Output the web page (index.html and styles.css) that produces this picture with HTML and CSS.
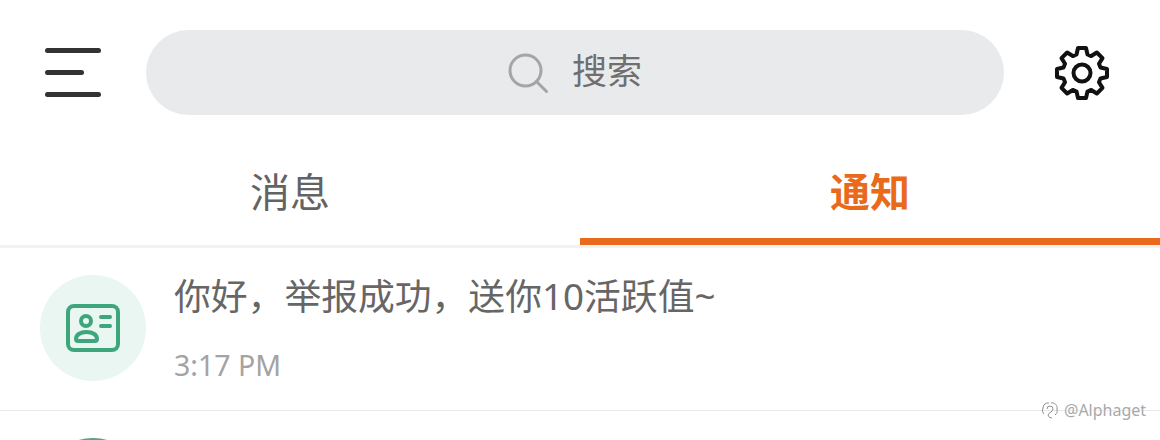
FILE: index.html
```html
<!DOCTYPE html>
<html lang="zh">
<head>
    <meta charset="UTF-8">
    <title>通知</title>
    <link rel="stylesheet" href="styles.css">
</head>
<body>
    <div class="page">
        <div class="topbar">
            <div class="menu">
                <span class="menu-line"></span>
                <span class="menu-line short"></span>
                <span class="menu-line"></span>
            </div>
            <div class="search">
                <svg class="search-icon" viewBox="0 0 40 40" fill="none" stroke="#a3a5a6" stroke-width="3" stroke-linecap="round">
                    <circle cx="17.5" cy="17.5" r="15.5"/>
                    <path d="M28.5 28.5 L38.5 38.5"/>
                </svg>
                <span class="search-text">搜索</span>
            </div>
            <svg class="gear" viewBox="0 0 56 56" fill="none" stroke="#111" stroke-width="4" stroke-linejoin="round">
                <circle cx="28" cy="28" r="8.500"/>
                <path d="M22.500 9.500 L24 3 H32 L33.500 9.500 L37.190 11.030 L42.850 7.490 L48.510 13.150 L44.970 18.810 L46.500 22.500 L53 24 V32 L46.500 33.500 L44.970 37.190 L48.510 42.850 L42.850 48.510 L37.190 44.970 L33.500 46.500 L32 53 H24 L22.500 46.500 L18.810 44.970 L13.150 48.510 L7.490 42.850 L11.030 37.190 L9.500 33.500 L3 32 V24 L9.500 22.500 L11.030 18.810 L7.490 13.150 L13.150 7.490 L18.810 11.030 Z"/>
            </svg>
        </div>
        <div class="tabs">
            <div class="tab">消息</div>
            <div class="tab active">通知</div>
        </div>
        <div class="row">
            <div class="avatar">
                <svg viewBox="0 0 54 48" width="54" height="48" fill="none" stroke="#3ea67d" stroke-width="4" stroke-linecap="round" stroke-linejoin="round">
                    <rect x="2" y="2" width="50" height="44" rx="6"/>
                    <circle cx="20" cy="17" r="5"/>
                    <path d="M12 37 H29 a2 2 0 0 0 2-2 c0-4-4-7-10.500-7 S10 31 10 35 a2 2 0 0 0 2 2 Z"/>
                    <path d="M35 13 H44 M35 22 H44"/>
                </svg>
            </div>
            <div class="row-body">
                <div class="row-title">你好，举报成功，送你10活跃值~</div>
                <div class="row-time">3:17 PM</div>
            </div>
        </div>
        <div class="row">
            <div class="avatar dark"></div>
        </div>
        <div class="watermark">
            <svg class="wm-icon" viewBox="0 0 20 20" fill="none" stroke="#8f8f8f" stroke-width="1">
                <path d="M9 3 A5 5 0 0 0 3 8 A5 5 0 0 0 4 14 M7 9 A3 3 0 0 1 13 9 C13 12 9 12 8 15 A4 4 0 0 0 12 18 M11 3 A5 5 0 0 1 17 9 A5 5 0 0 1 15 15"/>
            </svg>
            <span>@Alphaget</span>
        </div>
    </div>
</body>
</html>
```

FILE: styles.css
```css
body {
    margin: 0;
    background: #fff;
    font-family: "Noto Sans", "Noto Sans CJK SC", sans-serif;
}
.page {
    position: relative;
    height: 440px;
    overflow: hidden;
}
.topbar {
    display: flex;
    align-items: center;
    padding: 30px 50px 0 45px;
}
.menu {
    display: flex;
    flex-direction: column;
    gap: 17px;
    width: 56px;
    margin-right: 45px;
}
.menu-line {
    display: block;
    height: 5px;
    width: 56px;
    background: #333;
    border-radius: 3px;
}
.menu-line.short {
    width: 39px;
}
.search {
    flex: 1;
    height: 85px;
    border-radius: 43px;
    background: #e9eaec;
    display: flex;
    align-items: center;
    justify-content: center;
    gap: 24px;
}
.search-icon {
    width: 40px;
    height: 40px;
}
.search-text {
    font-size: 35px;
    line-height: 40px;
    padding-bottom: 3px;
    color: #6f6f6f;
}
.gear {
    width: 56px;
    height: 56px;
    margin-left: 50px;
}
.tabs {
    display: flex;
    margin-top: 35px;
    height: 98px;
    box-sizing: border-box;
    border-bottom: 3px solid #f2f2f2;
}
.tab {
    flex: 1;
    text-align: center;
    font-size: 40px;
    line-height: 84px;
    color: #636363;
}
.tab.active {
    color: #e96a1a;
    font-weight: bold;
    box-sizing: border-box;
    border-bottom: 7px solid #e96a1a;
    height: 95px;
}
.row {
    display: flex;
    padding: 27px 0 29px 40px;
    border-bottom: 1px solid #e8e8e8;
    height: 106px;
}
.avatar {
    width: 106px;
    height: 106px;
    border-radius: 50%;
    background: #e9f6f1;
    display: flex;
    align-items: center;
    justify-content: center;
    flex-shrink: 0;
}
.avatar.dark {
    background: #5aa08c;
}
.row-body {
    margin-left: 28px;
}
.row-title {
    font-size: 36.800px;
    line-height: 42px;
    color: #666;
}
.row-time {
    font-size: 28.500px;
    line-height: 34px;
    color: #a3a3a3;
    margin-top: 31px;
}
.watermark {
    position: absolute;
    left: 1040px;
    top: 399px;
    display: flex;
    align-items: center;
    gap: 4px;
    font-size: 16px;
    color: #a8a8a8;
    text-shadow: 0 0 2px #fff, 0 0 2px #fff;
}
.wm-icon {
    width: 20px;
    height: 20px;
}
```
